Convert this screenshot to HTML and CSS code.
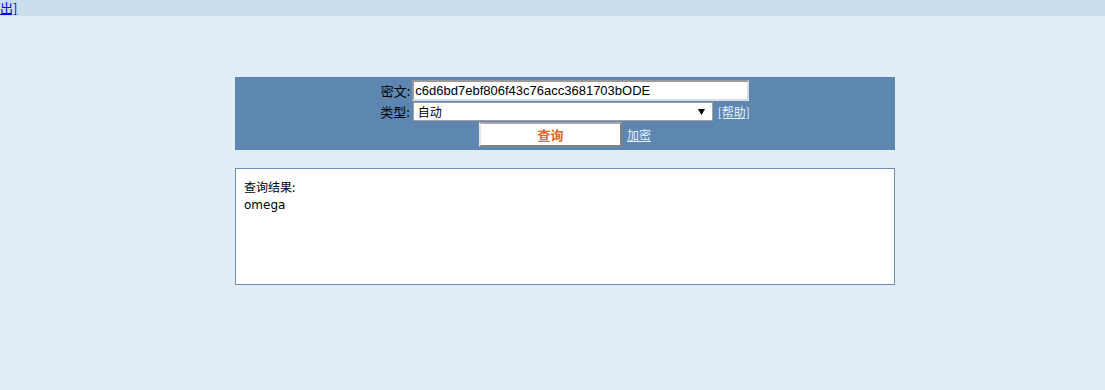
FILE: index.html
```html
<!DOCTYPE html>
<html lang="zh-CN">

<head>
    <meta charset="UTF-8">
    <meta name="viewport" content="width=device-width, initial-scale=1.0">
    <title>查询</title>
    <link rel="stylesheet" href="styles.css">
</head>

<body>
    <div class="topbar">
        <a href="#">出]</a>
    </div>

    <div class="main">
        <form class="panel">
            <div class="row">
                <label for="hash">密文:</label>
                <input type="text" id="hash" class="hash-input" value="c6d6bd7ebf806f43c76acc3681703bODE">
            </div>
            <div class="row">
                <label for="type">类型:</label>
                <select id="type" class="type-select">
                    <option>自动</option>
                </select>
                <a href="#" class="light-link">[帮助]</a>
            </div>
            <div class="row">
                <button type="submit" class="query-btn">查询</button>
                <a href="#" class="light-link">加密</a>
            </div>
        </form>

        <div class="result">
            <div>查询结果:</div>
            <div class="result-value">omega</div>
        </div>
    </div>
</body>

</html>
```

FILE: styles.css
```css
body {
    margin: 0;
    padding: 0;
    background-color: #e1eef7;
    font-family: "DejaVu Sans", "Noto Sans CJK SC", sans-serif;
    font-size: 12px;
    color: #000;
}

.topbar {
    height: 16px;
    background-color: #cadfee;
    font-size: 13px;
    line-height: 16px;
}

.topbar a {
    color: #0000ee;
    font-family: "Noto Sans CJK SC", sans-serif;
}

.main {
    width: 660px;
    margin: 61px 0 0 235px;
}

.panel {
    background-color: #5d87b1;
    padding: 3px 0 3px;
    display: flex;
    flex-direction: column;
    gap: 1px;
}

.row {
    display: flex;
    justify-content: center;
    align-items: center;
}

.row label {
    font-family: "Noto Sans CJK SC", sans-serif;
    font-size: 13px;
    margin-right: 2px;
}

.hash-input {
    width: 337px;
    height: 21px;
    box-sizing: border-box;
    padding: 0 1px;
    border: 2px solid;
    border-color: #9a9a9a #dcdcdc #dcdcdc #9a9a9a;
    font-family: "Liberation Sans", sans-serif;
    font-size: 13px;
    background: #fff;
    outline: none;
}

.type-select {
    appearance: none;
    -webkit-appearance: none;
    width: 300px;
    height: 19px;
    box-sizing: border-box;
    margin-left: 1px;
    padding: 0 4px;
    border: 1px solid #a0a0a0;
    border-radius: 0;
    font-family: "Noto Sans CJK SC", sans-serif;
    font-size: 12px;
    line-height: 17px;
    background: #fff url("data:image/svg+xml;utf8,<svg xmlns='http://www.w3.org/2000/svg' width='7' height='6'><path d='M0 0h7L3.5 6z' fill='black'/></svg>") no-repeat right 7px center;
}

.light-link {
    color: #e6f2ff;
    margin-left: 5px;
    font-family: "Noto Sans CJK SC", sans-serif;
    font-size: 12px;
}

.query-btn {
    width: 143px;
    height: 25px;
    background: #fff;
    border: 2px solid;
    border-color: #a8a8a8 #808080 #808080 #e8e8e8;
    color: #e8661c;
    font-family: "Noto Sans CJK SC", sans-serif;
    font-size: 13px;
    font-weight: bold;
    cursor: pointer;
}

.result {
    margin-top: 18px;
    height: 117px;
    box-sizing: border-box;
    background: #fff;
    border: 1px solid #6b8fb3;
    padding: 8px 8px;
    line-height: 19px;
    font-family: "Noto Sans CJK SC", sans-serif;
}

.result-value {
    font-family: "DejaVu Sans", sans-serif;
    font-size: 12px;
}
```
